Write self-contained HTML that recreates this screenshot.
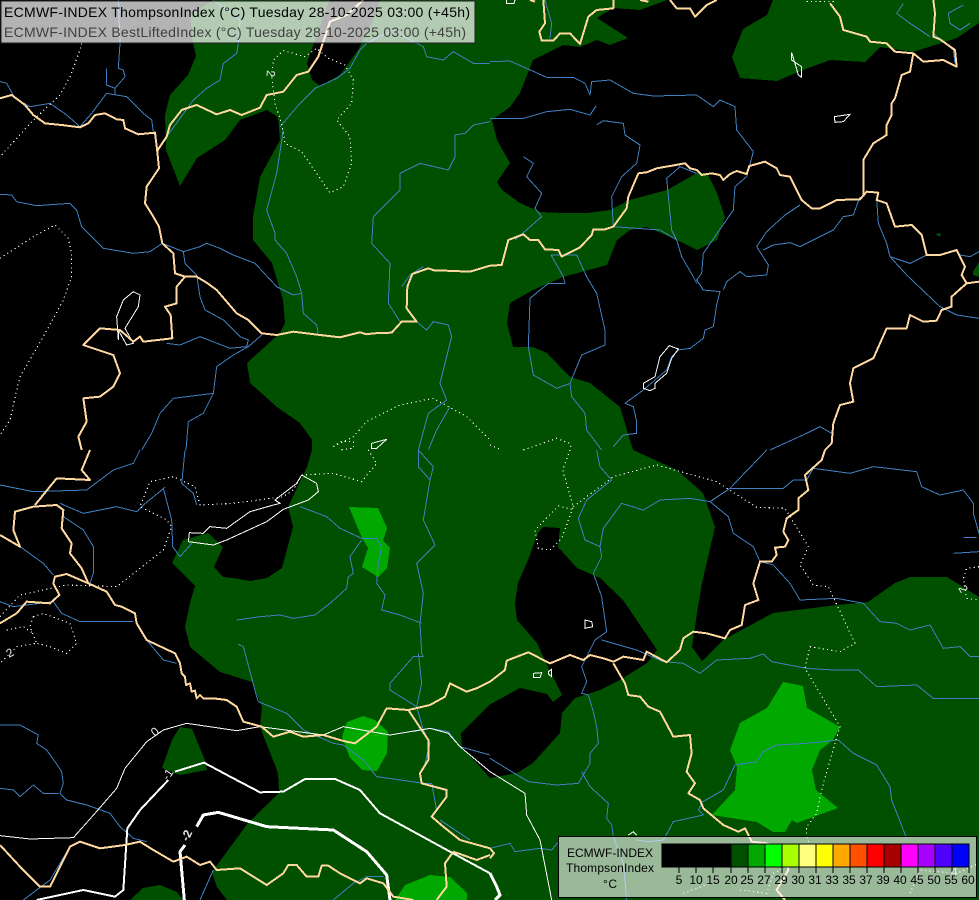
<!DOCTYPE html>
<html><head><meta charset="utf-8"><title>ECMWF-INDEX</title>
<style>
html,body{margin:0;padding:0;background:#000;width:979px;height:900px;overflow:hidden}
svg{display:block}
text{font-family:"Liberation Sans",sans-serif}
path{shape-rendering:crispEdges}
.t{fill:none;stroke:#ffd8a0;stroke-width:6;stroke-linejoin:round}
.r{fill:none;stroke:#4080c0;stroke-width:3;stroke-linejoin:round}
.w{fill:none;stroke:#fff;stroke-width:3}
.d{fill:none;stroke:#fff;stroke-width:3.4;stroke-dasharray:3.4 9.6}
.w2{fill:none;stroke:#fff;stroke-width:6}
.w3{fill:none;stroke:#fff;stroke-width:9}
</style></head><body>
<svg width="979" height="900" viewBox="0 0 979 900" xmlns="http://www.w3.org/2000/svg">
<rect width="979" height="900" fill="#000"/>
<g shape-rendering="crispEdges">
<path fill="#005000" d="M213,0 L667,0 640,10 613,8 597,18 628,38 610,45 597,40 580,47 563,45 533,60 520,93 510,107 492,120 497,140 510,163 497,182 502,190 520,203 540,212 563,213 587,213 610,210 630,200 667,190 697,173 707,173 717,193 725,217 717,240 697,250 677,240 647,227 630,230 617,240 607,265 563,277 533,290 510,303 507,323 513,347 533,347 547,353 570,377 590,383 620,407 633,450 677,470 703,493 715,527 702,583 697,613 692,647 702,661 723,640 773,613 837,605 868,602 895,583 910,577 947,577 979,597 979,900 227,900 217,887 212,872 248,823 279,793 278,773 260,727 262,707 252,682 220,672 190,647 185,627 190,603 195,586 172,563 183,540 208,533 223,547 214,567 223,577 233,578 250,581 267,578 282,568 293,527 288,507 307,467 312,450 312,440 300,423 277,407 250,383 247,363 280,333 285,323 283,300 272,263 253,240 253,217 260,177 280,140 278,117 267,110 240,120 225,140 197,158 180,186 166,150 165,115 170,95 188,75 196,56 193,43 190,15Z"/>
<path fill="#000" d="M330,0 L380,0 373,20 358,50 340,75 320,86 312,80 307,63 322,20Z"/>
<path fill="#000" d="M543,527 L560,528 558,547 577,568 600,578 623,600 657,650 647,663 620,680 600,690 575,698 562,713 560,733 533,763 517,773 490,778 462,747 461,733 489,705 520,688 547,694 553,702 562,695 548,667 537,643 517,620 515,603 518,583 528,560 538,533Z"/>
<path fill="#005000" d="M773,0 L767,15 743,29 732,57 740,78 777,81 803,70 830,60 865,62 880,47 913,52 957,38 979,23 979,0Z"/>
<path fill="#005000" d="M180,727 L192,729 204,758 207,770 180,775 162,768 172,740Z M130,900 L143,888 160,885 177,892 183,900Z M973,272 L979,262 979,277 973,275Z M935,234 L941,233 940,237Z"/>
<path fill="#00a800" d="M349,507 L378,508 387,528 383,541 390,548 387,568 378,577 362,567 368,548 362,538Z"/>
<path fill="#00a800" d="M347,722 L363,716 375,720 388,732 387,753 377,771 362,770 350,758 342,737Z"/>
<path fill="#00a800" d="M783,682 L803,686 807,708 840,727 833,740 820,750 812,770 816,790 838,808 813,817 797,823 792,820 785,832 773,832 757,822 712,815 735,790 737,767 730,750 740,723 767,708Z"/>
<path fill="#00a800" d="M395,900 L405,885 430,875 450,877 467,893 467,900Z"/>
</g>

<!-- Q1 -->
<g transform="scale(.33333)">
<path class="r" d="M0,245 20,250 45,295 90,320 150,310 200,345 240,380 275,340 320,280 380,290 430,340 455,360 460,395"/>
<path class="r" d="M345,285 345,265 375,230 370,210 355,205 360,130 355,0 M320,205 320,255 345,265"/>
<path class="r" d="M500,410 580,300 620,265 660,240 670,190 710,160 715,130 720,60 640,0"/>
<path class="r" d="M840,380 900,310 945,265 1010,235 1050,205 1080,150 1100,130 1180,90 1240,125 1270,140 1280,170 1330,180 1360,155 1420,190 1470,190"/>
<path class="r" d="M0,583 35,585 50,605 110,617 210,610 230,630 245,680 310,745 400,760 450,755 487,730 550,755 600,740 620,730 660,745 700,765 765,790 830,860 880,885 905,880 910,940 950,975 955,1000"/>
<path class="r" d="M550,755 555,790 590,825 600,890 615,930 670,960 720,1010 745,1020 740,1040 690,1045 600,1010 540,1035 500,1030"/>
<path class="r" d="M785,1005 745,1040 700,1065 650,1100 640,1180 520,1195 480,1240 455,1300 425,1350 M640,1180 610,1240 565,1265 558,1350"/>
<path class="r" d="M850,390 830,520 800,630 825,700 825,720 860,760 890,830 905,880"/>
<path class="r" d="M1470,365 1420,375 1395,400 1365,405 1365,470 1345,510 1260,490 1200,520 1200,570 1120,650 1115,730 1170,790 1165,910 1200,965 M1205,860 1230,825 1270,800"/>
<path class="r" d="M1250,965 1280,990 1300,965 1345,975 1355,1010 1340,1070 1320,1150 1340,1200 1285,1240 1255,1350 M1350,1220 1310,1290 1285,1350"/>
<path class="d" d="M245,130 240,150 210,230 180,285 100,360 0,470"/>
<path class="d" d="M0,775 100,710 165,675 205,715 215,760 215,830 190,900 130,1010 60,1130 30,1260 0,1305"/>
<path class="d" d="M815,230 820,180 850,152 915,170 950,145 985,175 1035,195 1060,240 1055,310 1010,360 1050,410 1055,490 1030,560 990,578 960,535 905,455 855,430 845,370 825,310 815,230"/>
<path class="d" d="M1000,1340 1060,1310 1100,1265 1200,1215 1300,1195 1400,1250 1470,1320 M1000,1340 1020,1325 1060,1325 1060,1345 1020,1350"/>
<path class="w" d="M355,1020 350,950 370,900 400,875 420,885 415,920 375,985 400,1030 380,1035 355,990 355,1020 M1115,1330 1160,1318 1130,1345 1115,1345Z"/>
<path class="t" d="M0,295 35,285 75,315 100,345 135,370 185,375 240,382 265,370 285,345 315,340 350,358 370,360 375,385 415,403 465,398 472,455 477,505 440,560 435,610 460,650 477,680 487,730 520,760 525,820 555,830 590,830 620,848 650,870 710,940 745,960 785,1000 830,1005 880,995 960,1005 1020,1012 1080,997 1100,1003 1120,1000 1175,998 1205,965 1250,965 1220,925 1222,860 1237,822 1285,805 1305,812 1335,812 1410,815 1470,797"/>
<path class="t" d="M590,830 555,830 530,860 530,910 495,920 512,945 517,1015 430,1025 420,1010 400,1025 360,990 300,985 250,1035 340,1065 360,1120 340,1160 300,1190 250,1195 260,1265 235,1310 245,1350"/>
<path class="t" d="M470,455 500,410 510,375 545,330 590,315 650,343 690,330 725,345 780,323 800,285 850,275 890,225 925,215 955,170 975,110 990,65 1040,45 1090,0"/>
</g>

<!-- Q2 -->
<g transform="translate(490,0) scale(.33333)">
<path class="r" d="M0,185 60,183 110,205 170,232 250,232 285,250 300,285 305,245 360,240 430,280 490,288 620,285 670,320 690,300 735,320 740,390 790,455 770,530 735,560 730,630 640,760 635,820 620,840 640,870 690,875 680,915 670,980 645,990 640,1015 600,1045 565,1050"/>
<path class="r" d="M0,355 100,355 170,335 240,328 300,345 318,318"/>
<path class="r" d="M320,375 340,362 400,370 405,405 450,435 440,490 395,530 365,590 370,680 440,685 510,690 560,720 575,770 610,830 620,850"/>
<path class="r" d="M100,470 130,490 110,530 155,580 135,625 155,650 75,720"/>
<path class="r" d="M620,520 570,500 530,535 540,640 545,690 560,720"/>
<path class="r" d="M183,765 220,830 225,850 175,850 120,895 115,1040 130,1125 200,1165 240,1150 275,1065 345,1035 345,990 320,880 290,830 260,765 183,765"/>
<path class="r" d="M240,1150 245,1190 285,1240 290,1290 335,1350 M370,1340 400,1305 440,1300 440,1265 430,1220 405,1210 460,1170 530,1110 545,1070 565,1050"/>
<path class="r" d="M700,870 710,845 750,815 770,830 830,825 835,795 800,740 830,695 885,645 930,615"/>
<path class="r" d="M820,750 850,735 900,728 930,740 1030,690 1060,650 1090,645 1110,590"/>
<path class="r" d="M1160,595 1165,670 1190,730 1200,770 1260,790 1310,765 M1200,770 1250,825 1350,920 1400,945 1467,955 M1410,765 1440,770 1467,755"/>
<path class="r" d="M840,1350 950,1300 990,1280 1025,1300"/>
<path class="r" d="M1320,110 1260,70 1220,40 1240,10 M1380,70 1375,40 1420,15 M1330,100 1390,150 1395,190 M1380,70 1410,90 1440,70 M165,0 185,70 180,115"/>
<path class="d" d="M0,1335 35,1350 M100,1350 200,1315 240,1330 245,1350 M950,5 1040,5"/>
<path class="w" d="M905,158 905,180 935,200 935,232 925,225 915,190Z M1033,350 1080,343 1060,365 1035,367Z M538,1037 565,1047 545,1075 530,1120 495,1150 495,1165 480,1172 460,1165 460,1150 495,1130 510,1070Z M50,0 50,10 72,10 75,0"/>
<path class="t" d="M0,797 35,795 55,720 100,703 120,720 145,720 165,748 205,750 215,770 270,742 305,705 310,688 345,688 370,680 410,625 415,590 445,520 470,517 500,505 540,498 585,490 600,505 620,510 635,525 665,520 690,525 700,540 720,522 740,513 770,522 778,498 825,485 860,505 870,525 900,530 935,600 965,625 990,625 1040,600 1110,598 1130,575 1165,578 1160,600 1190,610 1215,680 1265,675 1295,705 1310,765 1350,765 1400,750 1425,800 1415,825 1430,850 1385,890 1385,920 1355,930 1340,962 1300,965 1260,945 1250,985 1190,985 1150,1075 1090,1105 1080,1150 1090,1205 1050,1215 1030,1270 1025,1330 1005,1350"/>
<path class="t" d="M160,0 165,70 148,95 155,122 190,122 210,100 240,100 270,132 295,50 320,30 370,25 370,0 M540,0 560,25 600,25 615,50 650,15 680,0 M450,0 475,5 M120,0 135,5"/>
<path class="t" d="M1020,10 1050,50 1060,90 1130,110 1140,125 1190,130 1215,155 1270,160 1300,185 1360,180 1400,200 1395,150 1350,118 1330,110 1335,40 1330,0"/>
<path class="t" d="M1270,160 1260,215 1235,225 1215,295 1205,310 1205,345 1190,375 1190,405 1150,430 1120,480 1120,590"/>
<path class="t" d="M1430,850 1467,845"/>
</g>

<!-- Q3 -->
<g transform="translate(0,450) scale(.33333)">
<path class="r" d="M420,0 400,40 340,60 300,90 260,120 100,125 0,105"/>
<path class="r" d="M555,0 545,100 580,130 590,165"/>
<path class="r" d="M490,115 515,210 518,290 540,320 575,280 M495,112 430,165 410,185 350,170 250,190 180,160"/>
<path class="r" d="M190,200 250,240 280,290 280,370 270,400 M0,255 60,290 130,340 160,375 M0,455 40,470 160,455 185,490 240,515 400,515 M440,570 490,630 530,640"/>
<path class="r" d="M0,825 60,825 115,855 110,880 140,900 165,935 185,965 190,1000 180,1030 200,1050 260,1065 330,1090 360,1130 400,1165 440,1175 M0,1015 40,1020 60,1040 100,1005 130,1030 175,1030"/>
<path class="r" d="M900,170 980,200 1020,235 1085,265 1130,265 1145,290 1135,340 1130,400 1155,435 1145,480 1200,495 1265,520"/>
<path class="r" d="M1085,270 1050,320 1060,370 1045,380 1040,415 990,460 945,495 880,505 840,495 780,500 710,510"/>
<path class="r" d="M715,583 730,590 770,740 775,755 860,790 910,840 1000,880 1030,885 1090,930 1130,980 1270,1000 1295,1000 1310,1080 1295,1100"/>
<path class="r" d="M1255,0 1255,50 1290,90 1270,210 1305,285 1250,340 1270,430 1260,520 1265,610 1270,620 1240,620 1170,700 1170,720 1250,770 1265,700 1255,610 M1250,770 1270,840 1290,880 1270,960 M1255,0 1300,50 1290,90"/>
<path class="r" d="M1240,845 1290,835 1345,845 1380,890 1470,915 M1000,1350 1060,1300 1100,1280 1150,1280 M640,1260 600,1350 M210,1190 150,1290 70,1350 M1320,1110 1410,1170"/>
<path class="d" d="M905,75 1000,70 1085,95 1130,40 1105,0 M905,75 880,120 850,140 700,160 600,165 585,110 520,80 450,95 420,170 500,210 515,230 490,300 350,410 200,405 60,435 0,500"/>
<path class="d" d="M100,500 90,530 110,580 50,590 0,640 M100,500 130,490 210,520 230,580 200,610 150,590 110,580 M20,540 70,530 100,550"/>
<path class="w" d="M905,75 950,100 955,125 925,150 850,178 800,215 680,270 640,285 565,275 568,248 610,250 630,230 680,235 750,185 820,165 840,160 825,150 890,100 905,75"/>
<path class="w" d="M1470,965 1380,890 1345,850 1290,835 1170,855 1030,830 970,855 780,830 710,842 560,820 490,840 440,875 375,955 350,1015 285,1090 220,1163 90,1167 0,1157"/>
<path class="w2" d="M505,990 420,1080 382,1135 370,1320 345,1340 250,1320 110,1350 M525,965 612,938 700,985 780,1027 850,1025 915,987 1005,987 1080,1020 1140,1090 1350,1205 1470,1270"/>
<path class="w3" d="M590,1130 610,1095 655,1087 800,1130 1000,1140 1100,1205 1160,1275 1170,1350 M555,1185 540,1205 553,1350"/>
<path class="t" d="M1470,695 1430,715 1400,725 1350,700 1335,740 1290,765 1225,780 1160,775 1130,830 1065,880 1040,875 1020,870 970,855 910,860 870,845 820,860 785,830 730,815 710,770 680,750 640,745 610,745 600,735 590,745 585,722 575,725 570,700 558,705 555,680 545,670 540,640 525,610 440,570 410,520 405,490 365,470 345,465 320,425 265,400 245,355 210,310 215,280 185,235 190,180 170,165 100,170 45,185 40,240 60,290 0,255"/>
<path class="t" d="M265,400 200,372 165,380 160,400 178,435 150,460 80,455 50,490 0,520"/>
<path class="t" d="M270,0 245,60 270,90 170,85 105,165"/>
<path class="t" d="M0,1185 60,1250 120,1310 150,1310 210,1190 240,1175 300,1195 375,1185 420,1175 460,1200 520,1235 560,1220 600,1245 630,1235 650,1260 720,1255 800,1305 850,1270 865,1245 890,1245 920,1280 955,1280 965,1247 985,1247 1020,1270 1080,1300 1100,1285 1150,1300 1180,1340 1240,1350"/>
<path class="t" d="M1360,1205 1335,1240 1340,1310 1310,1350 M1225,780 1285,870 1285,930 1260,970 1265,1000 1340,1020 1340,1040 1295,1100 1330,1130 1380,1170 1470,1195 M1360,1205 1430,1230 1470,1215"/>
</g>

<!-- Q4 -->
<g transform="translate(490,450) scale(.33333)">
<path class="r" d="M320,0 330,50 365,90 290,150 265,205 285,270 330,290 335,320 310,370 335,440 350,545 315,570 295,610 275,650 290,695 275,730 295,735 310,785 320,830 325,880 300,910 300,940 265,1000 200,1005 115,995 65,965 0,925"/>
<path class="r" d="M660,155 600,145 510,150 460,180 395,160 340,235 330,290 M660,155 720,115 830,0"/>
<path class="r" d="M660,155 715,200 730,250 790,290 810,335 850,345 900,400 930,450 1040,445 1120,460 1170,515 1220,520 1260,540 1320,525 1360,595 1410,590 1440,620 1467,620"/>
<path class="r" d="M720,115 880,115 910,90 950,90 970,55 1080,70 1150,50 1280,65 1295,110 1350,135 1420,120 1450,160 1450,190 1467,250 M1420,262 1460,262 M1390,310 1467,305"/>
<path class="r" d="M335,570 440,600 520,635 580,640 630,670 680,630 780,625 820,612 845,635 950,655 1030,660 1105,660 1160,710 1280,705 1330,745 1467,745"/>
<path class="r" d="M275,965 300,1010 355,1060 350,1105 365,1125 370,1160 400,1240 410,1350"/>
<path class="r" d="M635,1060 625,1080 640,1095 550,1115 520,1170 475,1175 440,1170 M630,1060 700,1020 735,945 800,935 820,905 860,885 950,880 1045,870 1090,910 1160,945 1200,1010 1205,1050 1250,1165"/>
<path class="r" d="M0,1195 60,1180 75,1205 150,1195 185,1200 210,1170"/>
<path class="d" d="M240,0 218,60 250,170 215,265 180,300 145,295 135,240 205,168 245,178 M250,170 370,80 500,45 680,95 800,172 885,175 955,290 930,345 970,405 1015,410 1095,580 1050,605 960,590 945,655 1050,830 1000,1000 980,1090 950,1130 950,1160 960,1190"/>
<path class="d" d="M1467,350 1430,355 1420,385 1430,445 1467,450 M1260,1330 1290,1260 1400,1270 1467,1240 M750,1320 830,1330 850,1270 890,1250 M580,1330 660,1300"/>
<path class="w" d="M285,510 305,515 308,530 285,535Z M130,670 155,668 150,683 130,683Z M175,665 185,658 185,680 175,672Z M415,1155 430,1145 440,1155"/>
<path class="w" d="M0,965 105,1030 110,1095 150,1170 185,1350"/>
<path class="w3" d="M0,1270 20,1310 30,1335 15,1350"/>
<path class="t" d="M1005,0 995,30 945,75 955,120 925,145 925,180 890,205 880,245 895,270 885,290 855,293 860,315 845,335 810,335 790,400 805,450 765,465 755,525 720,540 705,565 650,550 610,545 580,565 570,600 530,637 470,605 460,630 400,620 370,635 340,625 300,615 280,630 240,615 180,640 115,607 50,632 45,660 0,695"/>
<path class="t" d="M370,640 405,700 415,735 450,740 475,770 510,785 550,860 600,855 605,910 590,965 615,1000 595,1030 630,1050 640,1075 700,1125 745,1145 765,1135 785,1175 830,1180 885,1200 895,1260 860,1320 885,1350 M0,1195 12,1210 0,1225"/>
</g>

<!-- contour labels -->
<g fill="#e8e8e8" font-size="12">
<text transform="translate(267,70) rotate(95)">2</text>
<text transform="translate(155,737) rotate(-40)">0</text>
<text transform="translate(168,781) rotate(-55)">-1</text>
<text transform="translate(188,842) rotate(-65)" font-weight="bold">-2</text>
<text transform="translate(9,658) rotate(-30)">2</text>
<text transform="translate(958,588) rotate(60)">2</text>
</g>

<!-- header -->
<rect x="1" y="1" width="474" height="42" fill="#fff" fill-opacity=".7" stroke="#222" stroke-width="1"/>
<text x="4" y="17" font-size="14" fill="#000" textLength="466" lengthAdjust="spacing">ECMWF-INDEX ThompsonIndex (°C) Tuesday 28-10-2025 03:00 (+45h)</text>
<text x="4" y="37" font-size="14" fill="#404040" textLength="462" lengthAdjust="spacing">ECMWF-INDEX BestLiftedIndex (°C) Tuesday 28-10-2025 03:00 (+45h)</text>

<!-- legend -->
<rect x="558.5" y="836.5" width="418" height="61" fill="#fff" fill-opacity=".6" stroke="#000" stroke-width="1"/>
<text x="567" y="857" font-size="12" fill="#000" textLength="86" lengthAdjust="spacing">ECMWF-INDEX</text>
<text x="566" y="872" font-size="12" fill="#000" textLength="88" lengthAdjust="spacing">ThompsonIndex</text>
<text x="603" y="888" font-size="12" fill="#000" textLength="14" lengthAdjust="spacing">°C</text>
<g shape-rendering="crispEdges" stroke="#000" stroke-width="1">
<rect x="662" y="844" width="17" height="23" fill="#000"/>
<rect x="679" y="844" width="17" height="23" fill="#000"/>
<rect x="696" y="844" width="17" height="23" fill="#000"/>
<rect x="713" y="844" width="18" height="23" fill="#000"/>
<rect x="731" y="844" width="17" height="23" fill="#005000"/>
<rect x="748" y="844" width="17" height="23" fill="#00a800"/>
<rect x="765" y="844" width="17" height="23" fill="#00ff00"/>
<rect x="782" y="844" width="17" height="23" fill="#a8ff00"/>
<rect x="799" y="844" width="17" height="23" fill="#ffff80"/>
<rect x="816" y="844" width="17" height="23" fill="#ffff00"/>
<rect x="833" y="844" width="17" height="23" fill="#ffa800"/>
<rect x="850" y="844" width="17" height="23" fill="#ff5000"/>
<rect x="867" y="844" width="17" height="23" fill="#ff0000"/>
<rect x="884" y="844" width="17" height="23" fill="#a80000"/>
<rect x="901" y="844" width="17" height="23" fill="#ff00ff"/>
<rect x="918" y="844" width="17" height="23" fill="#a800ff"/>
<rect x="935" y="844" width="17" height="23" fill="#5000ff"/>
<rect x="952" y="844" width="17" height="23" fill="#0000ff"/>
<path fill="none" d="M679,867V873 M696,867V873 M713,867V873 M731,867V873 M748,867V873 M765,867V873 M782,867V873 M799,867V873 M816,867V873 M833,867V873 M850,867V873 M867,867V873 M884,867V873 M901,867V873 M918,867V873 M935,867V873 M952,867V873 M969,867V873"/>
</g>
<g font-size="12" fill="#000" text-anchor="middle">
<text x="679" y="884">5</text><text x="696" y="884">10</text><text x="713" y="884">15</text><text x="731" y="884">20</text><text x="747" y="884">25</text><text x="764" y="884">27</text><text x="781" y="884">29</text><text x="798" y="884">30</text><text x="815" y="884">31</text><text x="832" y="884">33</text><text x="849" y="884">35</text><text x="866" y="884">37</text><text x="883" y="884">39</text><text x="900" y="884">40</text><text x="917" y="884">45</text><text x="934" y="884">50</text><text x="951" y="884">55</text><text x="968" y="884">60</text>
</g>
<text x="951" y="876" font-size="12" fill="#e8e8e8">4</text>
</svg>
</body></html>
